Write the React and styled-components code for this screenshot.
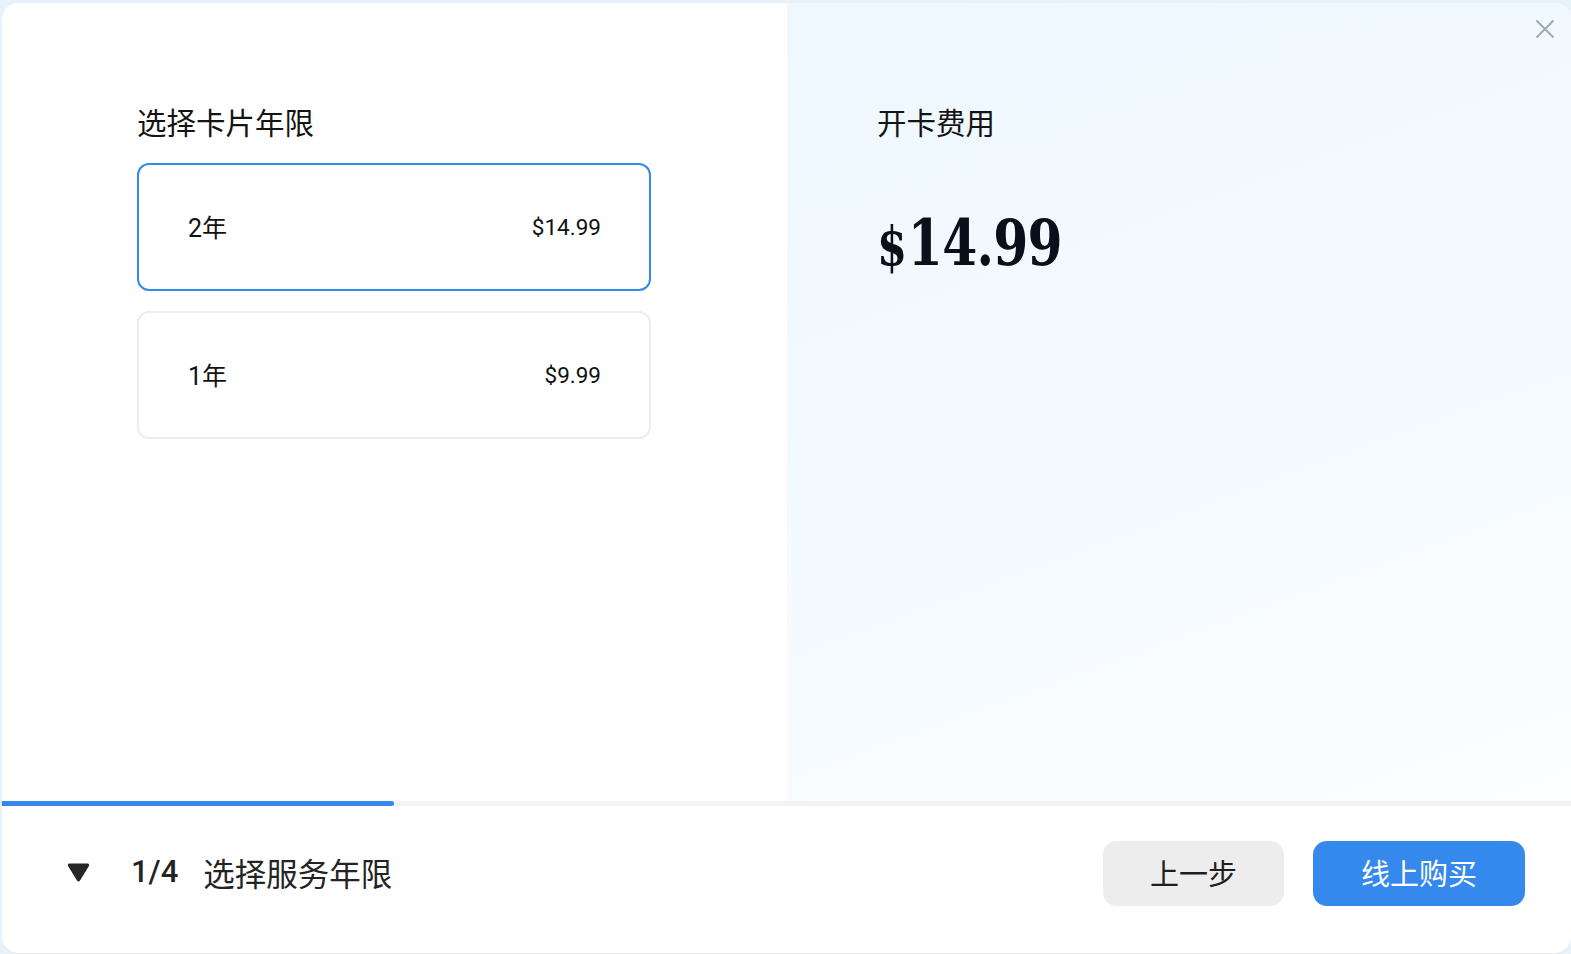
import * as React from "react";
import styled, { createGlobalStyle } from "styled-components";

const GlobalStyle = createGlobalStyle`
  html, body {
    margin: 0;
    padding: 0;
    background: #e7f2fb;
  }
  body {
    font-family: Roboto, "Noto Sans CJK SC", sans-serif;
  }
`;

const Page = styled.div`
  height: 100vh;
  box-sizing: border-box;
  padding: 3px 0 1px 2px;
  display: flex;
`;

const Modal = styled.div`
  position: relative;
  flex: 1;
  background: #ffffff;
  border-radius: 16px;
  overflow: hidden;
  display: flex;
  flex-direction: column;
  box-shadow: 0 1px 0 #e4e6e8;
`;

const Body = styled.div`
  display: flex;
  flex-direction: row;
  height: 798px;
`;

const LeftPane = styled.div`
  width: 785px;
  box-sizing: border-box;
  padding: 101px 0 0 135px;
  display: flex;
  flex-direction: column;
`;

const RightPane = styled.div`
  flex: 1;
  box-sizing: border-box;
  padding: 101px 0 0 90px;
  background: linear-gradient(160deg, #eef8fe 0%, #f4faff 55%, #fcfeff 100%);
  display: flex;
  flex-direction: column;
`;

const SectionTitle = styled.div`
  font-size: 29.5px;
  line-height: 40px;
  color: #141414;
`;

const OptionList = styled.div`
  margin-top: 19px;
  display: flex;
  flex-direction: column;
  gap: 20px;
`;

const Option = styled.div`
  width: 514px;
  height: 128px;
  box-sizing: border-box;
  border: 2px solid ${(p) => (p.$active ? "#3589ec" : "#ececec")};
  border-radius: 12px;
  background: #ffffff;
  display: flex;
  align-items: center;
  justify-content: space-between;
  padding: 0 48px 0 49px;
  cursor: pointer;
`;

const OptionLabel = styled.span`
  font-size: 25px;
  color: #111111;
  margin-top: -3px;
`;

const OptionPrice = styled.span`
  font-size: 22.5px;
  color: #111111;
`;

const BigPrice = styled.div`
  margin-top: 59px;
  display: flex;
  align-items: baseline;
  color: #0a0f1a;
  font-family: "DejaVu Serif", "Liberation Serif", serif;
  font-weight: 700;
  line-height: 80px;
  transform: scaleX(0.8);
  transform-origin: left center;
`;

const Currency = styled.span`
  font-size: 54px;
  margin-right: 1px;
`;

const Amount = styled.span`
  font-size: 63px;
  letter-spacing: -1px;
`;

const CloseButton = styled.button`
  position: absolute;
  top: 15px;
  right: 15px;
  width: 22px;
  height: 22px;
  padding: 0;
  border: none;
  background: transparent;
  cursor: pointer;
  display: flex;
  align-items: center;
  justify-content: center;
`;

const Track = styled.div`
  height: 5px;
  background: #f2f3f4;
`;

const Fill = styled.div`
  height: 100%;
  background: #3589ec;
  border-radius: 0 3px 3px 0;
`;

const Footer = styled.div`
  flex: 1;
  display: flex;
  align-items: flex-start;
  justify-content: space-between;
  padding: 35px 46px 0 65px;
`;

const StepInfo = styled.div`
  height: 65px;
  display: flex;
  align-items: center;
  color: #242424;
  margin-top: -2px;
`;

const Caret = styled.svg`
  width: 23px;
  height: 21px;
  margin-right: 41px;
  margin-top: 2px;
`;

const StepCount = styled.span`
  font-size: 31px;
  font-weight: 500;
  margin-right: 25px;
`;

const StepName = styled.span`
  font-size: 31.5px;
`;

const Actions = styled.div`
  display: flex;
  gap: 29px;
`;

const ActionButton = styled.button`
  height: 65px;
  width: ${(p) => (p.$primary ? "212px" : "181px")};
  border: none;
  border-radius: 14px;
  background: ${(p) => (p.$primary ? "#3589ec" : "#ededed")};
  color: ${(p) => (p.$primary ? "#ffffff" : "#1e1e1e")};
  font-family: Roboto, "Noto Sans CJK SC", sans-serif;
  font-size: 29px;
  padding: 0 0 3px;
  cursor: pointer;
`;

const plans = [
  { label: "2年", price: "$14.99", active: true },
  { label: "1年", price: "$9.99", active: false },
];

export default function App() {
  return (
    <Page>
      <GlobalStyle />
      <Modal>
        <Body>
          <LeftPane>
            <SectionTitle>选择卡片年限</SectionTitle>
            <OptionList>
              {plans.map((p) => (
                <Option key={p.label} $active={p.active}>
                  <OptionLabel>{p.label}</OptionLabel>
                  <OptionPrice>{p.price}</OptionPrice>
                </Option>
              ))}
            </OptionList>
          </LeftPane>
          <RightPane>
            <SectionTitle>开卡费用</SectionTitle>
            <BigPrice>
              <Currency>$</Currency>
              <Amount>14.99</Amount>
            </BigPrice>
          </RightPane>
        </Body>
        <CloseButton aria-label="close">
          <svg width="18" height="18" viewBox="0 0 18 18">
            <path d="M1 1L17 17M17 1L1 17" stroke="#9ea8b3" strokeWidth="1.8" strokeLinecap="round" />
          </svg>
        </CloseButton>
        <Track>
          <Fill style={{ width: `${(1 / 4) * 100}%` }} />
        </Track>
        <Footer>
          <StepInfo>
            <Caret viewBox="0 0 23 21">
              <path d="M2.5 1.5H20.5C22 1.5 22.6 3 21.8 4.2L13 18.6C12.2 19.8 10.8 19.8 10 18.6L1.2 4.2C0.4 3 1 1.5 2.5 1.5Z" fill="#262626" />
            </Caret>
            <StepCount>1/4</StepCount>
            <StepName>选择服务年限</StepName>
          </StepInfo>
          <Actions>
            <ActionButton>上一步</ActionButton>
            <ActionButton $primary>线上购买</ActionButton>
          </Actions>
        </Footer>
      </Modal>
    </Page>
  );
}
